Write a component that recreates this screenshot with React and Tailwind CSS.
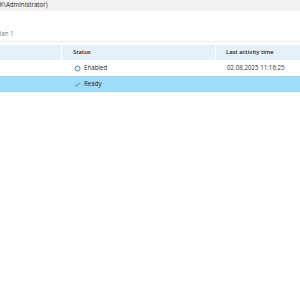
import React from 'react';

const rows = [
  { status: 'Enabled', icon: 'circle', time: '02.08.2025 11:16:25', selected: false },
  { status: 'Ready', icon: 'check', time: '', selected: true },
];

const StatusIcon = ({ type }) =>
  type === 'circle' ? (
    <svg width="7" height="7" viewBox="0 0 7 7" className="shrink-0">
      <circle cx="3.5" cy="3.5" r="2.5" fill="none" stroke="#3a7ca5" strokeWidth="0.9" />
    </svg>
  ) : (
    <svg width="7" height="7" viewBox="0 0 7 7" className="shrink-0">
      <path d="M1.2 3.9 L2.8 5.4 L5.8 1.6" fill="none" stroke="#3a7ca5" strokeWidth="0.9" />
    </svg>
  );

const App = () => {
  return (
    <div className="w-[300px] h-[300px] bg-white overflow-hidden font-['Open_Sans','Noto_Sans',sans-serif] text-[6.2px] text-[#1f1f1f]">
      {/* window title */}
      <div className="h-[11px] bg-[#f3f3f3] flex items-center -ml-[2px] leading-none">
        <span>(K\Administrator)</span>
      </div>

      {/* tab label */}
      <div className="h-[30px] flex items-end pb-[4px] -ml-[4px] text-[#7a7a7a] leading-none">
        <span>Plan 1</span>
      </div>

      <div className="h-[4px] border-t border-[#e4eef6]" />

      {/* table */}
      <div className="flex flex-col">
        <div className="flex h-[15px] bg-[#e6f0f8] font-semibold text-[5.8px] leading-none">
          <div className="w-[62px] border-r border-white" />
          <div className="w-[154px] border-r border-white flex items-center pl-[11px]">Status</div>
          <div className="flex-1 flex items-center pl-[10px]">Last activity time</div>
        </div>
        {rows.map((r) => (
          <div
            key={r.status}
            className={`flex h-[16px] leading-none ${r.selected ? 'bg-[#9fdcf9]' : 'bg-white'}`}
          >
            <div className="w-[62px]" />
            <div className="w-[154px] flex items-center gap-[3px] pl-[12px]">
              <StatusIcon type={r.icon} />
              <span>{r.status}</span>
            </div>
            <div className="flex-1 flex items-center pl-[11px] text-[#333]">{r.time}</div>
          </div>
        ))}
      </div>
    </div>
  );
};

export default App;
